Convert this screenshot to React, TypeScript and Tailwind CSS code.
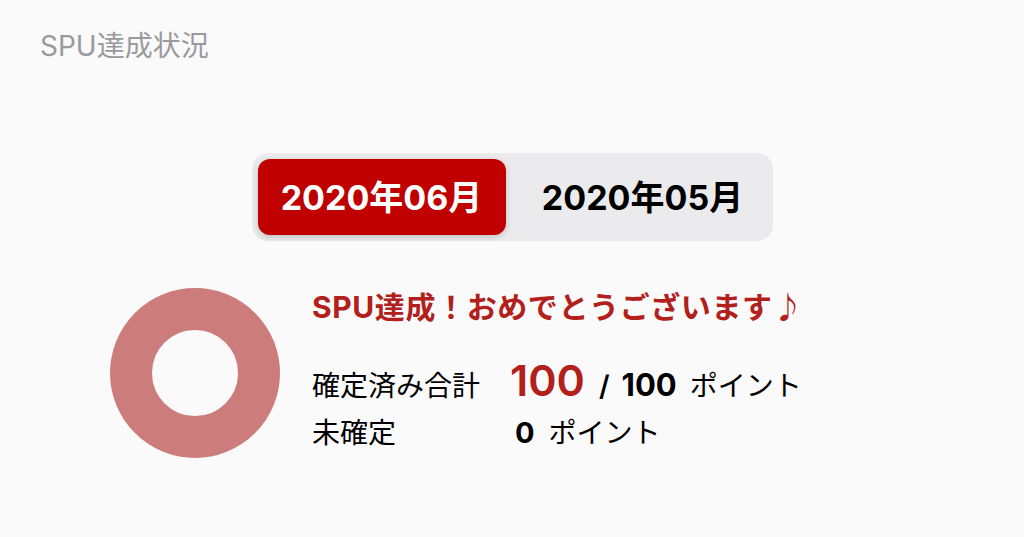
import React from 'react'

const FONT = "font-['Inter','Noto_Sans_CJK_JP',sans-serif]"

function Donut() {
  return (
    <svg width="170" height="170" viewBox="0 0 170 170" className="shrink-0">
      <circle cx="85" cy="85" r="64" fill="none" stroke="#cd7c7c" strokeWidth="42" />
    </svg>
  )
}

export default function App() {
  const months = ['2020年06月', '2020年05月']
  const active = 0

  return (
    <div className={`w-full h-[537px] overflow-hidden bg-[#fafafa] ${FONT}`}>
      <div className="pt-[30px] pl-[40px] text-[28px] leading-[32px] text-[#9a9a9e]">SPU達成状況</div>

      <div className="mt-[91px] mx-auto w-fit flex gap-[13px] p-[6px] rounded-[16px] bg-[#ebebee]">
        {months.map((m, i) => (
          <button
            key={m}
            className={
              i === active
                ? 'w-[248px] h-[76px] rounded-[12px] bg-[#c00000] text-white text-[34px] font-bold shadow-[0_2px_6px_rgba(0,0,0,0.18)]'
                : 'w-[248px] h-[76px] rounded-[12px] text-black text-[34px] font-bold'
            }
          >
            {m}
          </button>
        ))}
      </div>

      <div className="mt-[47px] pl-[110px] flex items-start gap-[32px]">
        <Donut />
        <div className="pt-[1px]">
          <div className="text-[30px] leading-[36px] font-bold tracking-[0.6px] text-[#b3201c]">SPU達成！おめでとうございます♪</div>
          <div className="mt-[30px] text-[28px] text-black">
            <div className="flex items-baseline h-[50px] leading-[50px]">
              <span className="w-[198px]">確定済み合計</span>
              <span className="text-[43px] font-semibold text-[#b3201c]">100</span>
              <span className="ml-[14px] text-[28px] font-semibold">/</span>
              <span className="ml-[12px] text-[31px] font-bold">100</span>
              <span className="ml-[13px]">ポイント</span>
            </div>
            <div className="flex items-baseline h-[50px] leading-[50px] mt-[3px]">
              <span className="w-[203px]">未確定</span>
              <span className="text-[29px] font-bold">0</span>
              <span className="ml-[14px]">ポイント</span>
            </div>
          </div>
        </div>
      </div>
    </div>
  )
}
